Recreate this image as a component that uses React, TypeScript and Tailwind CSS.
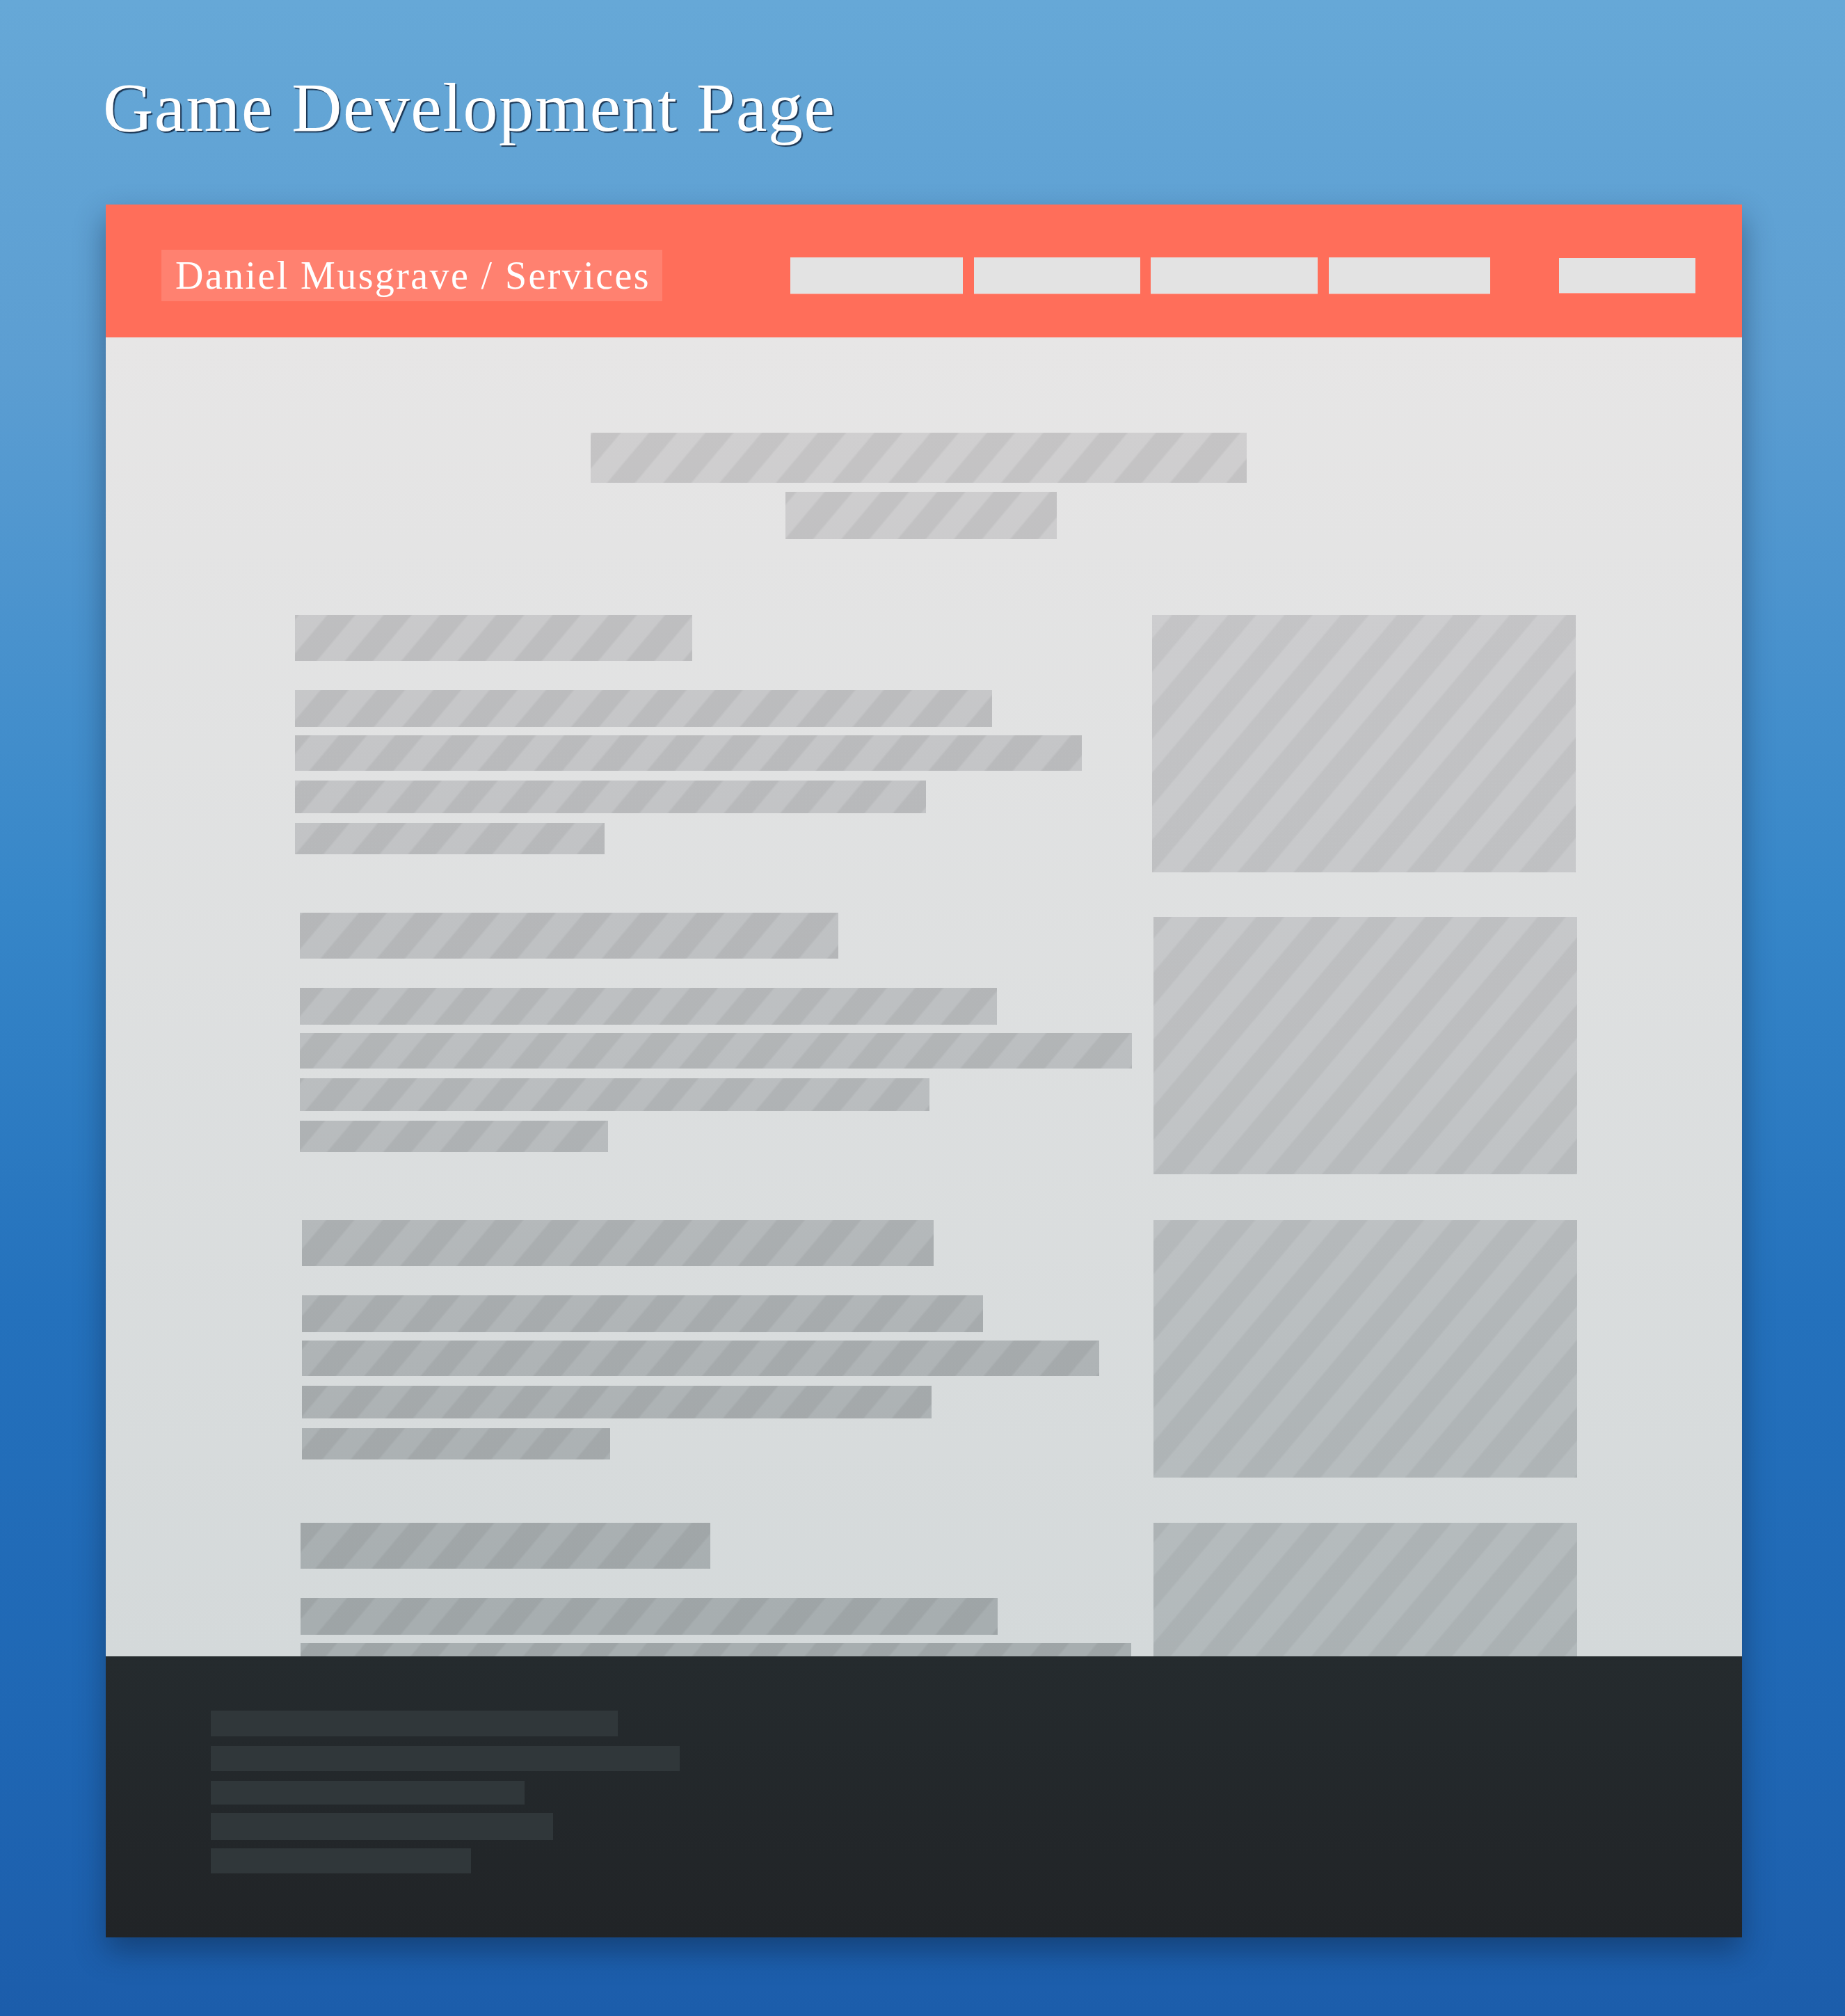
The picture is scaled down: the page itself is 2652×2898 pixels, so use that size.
import React from 'react';

// striped placeholder fills, gradient pinned to the page so tone darkens toward the bottom
const lineFill =
  'bg-fixed bg-[image:repeating-linear-gradient(130deg,rgba(0,0,0,0.055)_0px,rgba(0,0,0,0.055)_28px,rgba(0,0,0,0)_31px,rgba(0,0,0,0)_59px,rgba(0,0,0,0.055)_62px),linear-gradient(to_bottom,#d0cfd0_620px,#c4c5c7_1100px,#bcbfc1_1500px,#afb4b6_1950px,#a7aeb0_2330px)]';
const imageFill =
  'bg-fixed bg-[image:repeating-linear-gradient(130deg,rgba(0,0,0,0.045)_0px,rgba(0,0,0,0.045)_28px,rgba(0,0,0,0)_31px,rgba(0,0,0,0)_59px,rgba(0,0,0,0.045)_62px),linear-gradient(to_bottom,#cdcdcf_880px,#c4c6c8_1500px,#b9bec0_1940px,#b2b9bb_2380px)]';

interface SectionProps {
  pad: string;
  colW: string;
  rowTop: string;
  imageTop?: string;
  heading: string;
  lines: [string, string, string, string];
}

const Section: React.FC<SectionProps> = ({ pad, colW, rowTop, imageTop = '', heading, lines }) => (
  <div className={`flex items-start ${pad} ${rowTop}`}>
    <div className={`flex flex-col items-start ${colW}`}>
      <div className={`h-[66px] ${heading} ${lineFill}`} />
      <div className={`mt-[42px] h-[53px] ${lines[0]} ${lineFill}`} />
      <div className={`mt-[12px] h-[51px] ${lines[1]} ${lineFill}`} />
      <div className={`mt-[14px] h-[47px] ${lines[2]} ${lineFill}`} />
      <div className={`mt-[14px] h-[45px] ${lines[3]} ${lineFill}`} />
    </div>
    <div className={`h-[370px] w-[609px] shrink-0 ${imageTop} ${imageFill}`} />
  </div>
);

export default function App() {
  return (
    <div className="min-h-[2898px] w-full overflow-hidden bg-[linear-gradient(to_bottom,#66a8d7_0%,#5c9ed2_18%,#3686c8_45%,#2471bc_65%,#1f67b4_85%,#1c5dab_100%)]">
      <h1 className="pl-[148px] pt-[105px] font-['Liberation_Serif',serif] text-[100px] leading-[100px] tracking-[1.5px] text-white [text-shadow:2px_2px_1px_rgba(20,42,70,0.9)]">
        Game Development Page
      </h1>

      <div className="ml-[152px] mt-[89px] w-[2352px] shadow-[0_20px_40px_rgba(10,30,60,0.45)]">
        {/* header */}
        <header className="flex h-[191px] items-center bg-[#ff6e5a] pl-20 pr-[67px] pt-[12px]">
          <div className="flex h-[74px] w-[720px] items-center bg-[#ff8170] pl-5 font-['Liberation_Serif',serif] text-[56px] leading-[74px] tracking-[2.4px] text-white">
            Daniel Musgrave / Services
          </div>
          <div className="ml-[184px] flex items-center">
            <div className="h-[52px] w-[248px] bg-[#e3e3e3] shadow-[0_1px_0_rgba(255,255,255,0.35)]" />
            <div className="ml-4 h-[52px] w-[239px] bg-[#e3e3e3] shadow-[0_1px_0_rgba(255,255,255,0.35)]" />
            <div className="ml-[15px] h-[52px] w-[240px] bg-[#e3e3e3] shadow-[0_1px_0_rgba(255,255,255,0.35)]" />
            <div className="ml-4 h-[52px] w-[232px] bg-[#e3e3e3] shadow-[0_1px_0_rgba(255,255,255,0.35)]" />
            <div className="ml-[99px] h-[50px] w-[196px] bg-[#e3e3e3] shadow-[0_1px_0_rgba(255,255,255,0.35)]" />
          </div>
        </header>

        {/* body */}
        <main className="h-[1896px] overflow-hidden bg-[linear-gradient(to_bottom,#e7e6e6,#d4d9da)] pt-[137px]">
          <div className="flex flex-col">
            <div className={`ml-[697px] h-[72px] w-[943px] ${lineFill}`} />
            <div className={`ml-[977px] mt-[13px] h-[68px] w-[390px] ${lineFill}`} />
          </div>

          <Section
            pad="pl-[272px]"
            colW="w-[1232px]"
            rowTop="mt-[109px]"
            heading="w-[571px]"
            lines={['w-[1002px]', 'w-[1131px]', 'w-[907px]', 'w-[445px]']}
          />
          <Section
            pad="pl-[279px]"
            colW="w-[1227px]"
            rowTop="mt-[58px]"
            imageTop="mt-[6px]"
            heading="w-[774px]"
            lines={['w-[1002px]', 'w-[1196px]', 'w-[905px]', 'w-[443px]']}
          />
          <Section
            pad="pl-[282px]"
            colW="w-[1224px]"
            rowTop="mt-[66px]"
            heading="w-[908px]"
            lines={['w-[979px]', 'w-[1146px]', 'w-[905px]', 'w-[443px]']}
          />
          <Section
            pad="pl-[280px]"
            colW="w-[1226px]"
            rowTop="mt-[65px]"
            heading="w-[589px]"
            lines={['w-[1002px]', 'w-[1194px]', 'w-[905px]', 'w-[443px]']}
          />
        </main>

        {/* footer */}
        <footer className="flex h-[404px] flex-col items-start bg-[linear-gradient(to_bottom,#252b2e,#212427)] pl-[151px] pt-[78px]">
          <div className="h-[37px] w-[585px] bg-[#30373a]" />
          <div className="mt-[14px] h-[36px] w-[674px] bg-[#30373a]" />
          <div className="mt-[14px] h-[34px] w-[451px] bg-[#30373a]" />
          <div className="mt-[12px] h-[39px] w-[492px] bg-[#30373a]" />
          <div className="mt-[12px] h-[36px] w-[374px] bg-[#30373a]" />
        </footer>
      </div>
    </div>
  );
}
